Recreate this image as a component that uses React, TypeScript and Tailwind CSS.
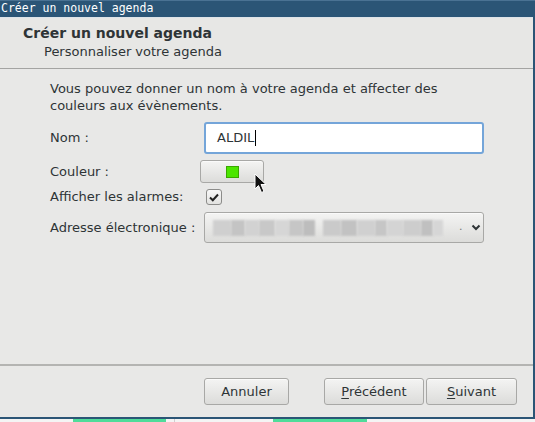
import React from "react";

const font = { fontFamily: '"DejaVu Sans", "Liberation Sans", sans-serif' };

const GtkButton = ({
  children,
  className = "",
}: {
  children?: React.ReactNode;
  className?: string;
}) => (
  <div
    className={`flex items-center justify-center rounded-[3px] border border-[#a8a8a6] bg-gradient-to-b from-[#f4f4f3] to-[#dcdcda] text-[13px] text-[#2e3436] shadow-[inset_0_1px_0_#fafafa] ${className}`}
  >
    {children}
  </div>
);

const Cursor = () => (
  <svg
    className="absolute left-[50px] top-[13px]"
    width="14"
    height="22"
    viewBox="0 0 14 22"
  >
    <path
      d="M1 1 L1 16 L4.5 12.5 L7.5 19.5 L10 18.4 L7 11.5 L12 11.5 Z"
      fill="#111"
      stroke="#fff"
      strokeWidth="1"
      strokeLinejoin="round"
    />
  </svg>
);

const blurBlocks = [
  [0, 18, "#cfcfcf"],
  [18, 14, "#c4c4c4"],
  [32, 14, "#d2d2d2"],
  [46, 16, "#c8c8c8"],
  [62, 14, "#d6d6d6"],
  [76, 14, "#c6c6c6"],
  [90, 12, "#bdbdbd"],
  [110, 18, "#cacaca"],
  [128, 16, "#c2c2c2"],
  [144, 18, "#d0d0d0"],
  [162, 12, "#c6c6c6"],
  [174, 16, "#d4d4d4"],
  [190, 18, "#cdcdcd"],
  [208, 12, "#c0c0c0"],
  [220, 10, "#d6d6d6"],
] as const;

export default function App() {
  return (
    <div
      className="relative flex h-[422px] w-[535px] flex-col overflow-hidden bg-[#2b5576]"
      style={font}
    >
      {/* window title bar */}
      <div
        className="flex h-[17px] shrink-0 items-center border-t border-[#4a7293] pl-[1px] text-[11.5px] leading-none text-white"
        style={{ fontFamily: '"DejaVu Sans Mono", monospace' }}
      >
        Créer un nouvel agenda
      </div>

      {/* dialog body */}
      <div className="mr-[2px] flex h-[400px] shrink-0 flex-col bg-[#e8e8e7]">
        {/* header */}
        <div className="flex h-[52px] shrink-0 flex-col border-t border-[#dde3e8] border-b border-b-[#a4a4a2] bg-[#e7e7e5] pt-[6px]">
          <div className="pl-[23px] text-[14px] font-bold leading-[18px] text-[#2e3436]">
            Créer un nouvel agenda
          </div>
          <div className="mt-[2px] pl-[44px] text-[13px] leading-[16px] text-[#2e3436]">
            Personnaliser votre agenda
          </div>
        </div>

        {/* content */}
        <div className="flex-1 pl-[50px] pt-[11px] text-[13px] text-[#2e3436]">
          <p className="w-[400px] leading-[17px]">
            Vous pouvez donner un nom à votre agenda et affecter des couleurs
            aux évènements.
          </p>

          <div className="mt-[8px] grid grid-cols-[154px_280px]">
            <div className="flex h-[32px] items-center">Nom :</div>
            <div className="flex h-[32px] items-center rounded-[3px] border-2 border-[#74a5d9] bg-white pl-[11px]">
              <span>ALDIL</span>
              <span className="ml-[1px] h-[16px] w-[1px] bg-black" />
            </div>

            <div className="mt-[6px] flex h-[23px] items-center">Couleur :</div>
            <div className="relative mt-[6px] h-[23px]">
              <GtkButton className="ml-[-4px] h-[23px] w-[64px]">
                <div className="h-[12px] w-[13px] border border-[#3aa800] bg-[#4ce600]" />
              </GtkButton>
              <Cursor />
            </div>

            <div className="mt-[5px] flex h-[18px] items-center">
              Afficher les alarmes:
            </div>
            <div className="mt-[5px] flex h-[18px] items-center">
              <div className="ml-[2px] flex h-[16px] w-[16px] items-center justify-center rounded-[3px] border border-[#8c8c8a] bg-gradient-to-b from-[#f8f8f8] to-[#e2e2e0]">
                <svg width="10" height="9" viewBox="0 0 10 9">
                  <path
                    d="M1 4.5 L3.8 7.2 L9 1.5"
                    fill="none"
                    stroke="#222"
                    strokeWidth="2"
                  />
                </svg>
              </div>
            </div>

            <div className="mt-[6px] flex h-[31px] items-center">
              Adresse électronique :
            </div>
            <GtkButton className="mt-[6px] h-[31px] !justify-start pl-[8px]">
              <div className="relative flex h-[16px] w-[232px]">
                {blurBlocks.map(([x, w, c], i) => (
                  <div
                    key={i}
                    className="absolute top-0 h-[16px] blur-[1px]"
                    style={{ left: x, width: w, background: c }}
                  />
                ))}
              </div>
              <span className="ml-[14px] text-[11px] text-[#777]">.</span>
              <svg className="ml-[8px]" width="10" height="7" viewBox="0 0 10 7">
                <path
                  d="M1.5 1.5 L5 5 L8.5 1.5"
                  fill="none"
                  stroke="#2e3436"
                  strokeWidth="2"
                />
              </svg>
            </GtkButton>
          </div>
        </div>

        {/* footer */}
        <div className="flex h-[53px] shrink-0 items-start border-t-2 border-[#b4b4b2] pt-[12px]">
          <GtkButton className="ml-[204px] h-[27px] w-[85px]">Annuler</GtkButton>
          <GtkButton className="ml-[35px] h-[27px] w-[100px]">
            <span>
              <span className="underline underline-offset-2">P</span>récédent
            </span>
          </GtkButton>
          <GtkButton className="ml-[2px] h-[27px] w-[91px]">
            <span>
              <span className="underline underline-offset-2">S</span>uivant
            </span>
          </GtkButton>
        </div>
      </div>

      {/* window behind */}
      <div className="mt-[2px] flex h-[3px] shrink-0 bg-[#f4f4f4]">
        <div className="ml-[73px] h-[3px] w-[93px] bg-[#4fdc9a]" />
        <div className="ml-[8px] h-[3px] w-[1px] bg-[#cfcfcf]" />
        <div className="ml-[98px] h-[3px] w-[94px] bg-[#4fdc9a]" />
      </div>
    </div>
  );
}
